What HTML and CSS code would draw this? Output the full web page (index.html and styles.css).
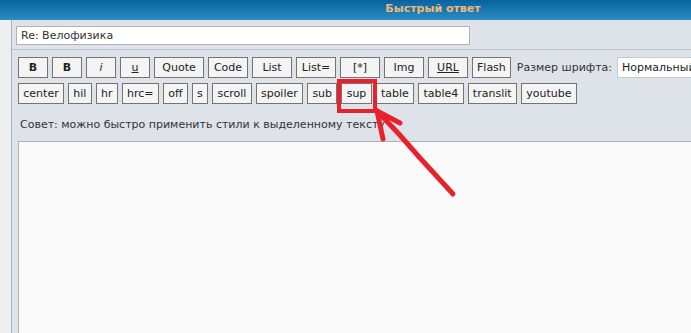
FILE: index.html
```html
<!DOCTYPE html>
<html lang="ru">
<head>
    <meta charset="UTF-8">
    <title>Быстрый ответ</title>
    <link rel="stylesheet" href="styles.css">
</head>
<body>
    <div class="wrap">
        <div class="head"><span>Быстрый ответ</span></div>
        <div class="form">
            <div class="side"></div>
            <div class="main">
                <div class="subj-row">
                    <input class="subj" type="text" value="Re: Велофизика">
                </div>
                <div class="tools">
                    <div class="row">
                        <button class="btn w30"><b>B</b></button>
                        <button class="btn w30"><b>B</b></button>
                        <button class="btn w30"><i>i</i></button>
                        <button class="btn w30"><u>u</u></button>
                        <button class="btn w50">Quote</button>
                        <button class="btn w40">Code</button>
                        <button class="btn w40">List</button>
                        <button class="btn w40">List=</button>
                        <button class="btn w40">[*]</button>
                        <button class="btn w40">Img</button>
                        <button class="btn w40"><u>URL</u></button>
                        <button class="btn">Flash</button>
                        <span class="size-label">Размер шрифта:</span>
                        <div class="select">Нормальный</div>
                    </div>
                    <div class="row row-tags">
                        <button class="btn">center</button>
                        <button class="btn">hil</button>
                        <button class="btn">hr</button>
                        <button class="btn">hrc=</button>
                        <button class="btn">off</button>
                        <button class="btn">s</button>
                        <button class="btn">scroll</button>
                        <button class="btn">spoiler</button>
                        <button class="btn">sub</button>
                        <button class="btn">sup</button>
                        <button class="btn">table</button>
                        <button class="btn">table4</button>
                        <button class="btn">translit</button>
                        <button class="btn">youtube</button>
                    </div>
                    <p class="hint">Совет: можно быстро применить стили к выделенному тексту</p>
                    <div class="message"></div>
                </div>
            </div>
        </div>

        <!-- red annotation drawn over the screenshot -->
        <svg class="mark" width="691" height="333" viewBox="0 0 691 333">
            <rect x="339" y="81" width="36" height="30" fill="none" stroke="#e8222c" stroke-width="4"/>
            <path d="M453 194 L420 158 L398 133 L377 111" fill="none" stroke="#e8222c" stroke-width="5" stroke-linecap="round" stroke-linejoin="round"/>
            <path d="M377 111 L400 123" fill="none" stroke="#e8222c" stroke-width="5" stroke-linecap="round"/>
            <path d="M377 111 L383 139" fill="none" stroke="#e8222c" stroke-width="5" stroke-linecap="round"/>
        </svg>
    </div>
</body>
</html>
```

FILE: styles.css
```css
*{
    box-sizing: border-box;
}
body{
    margin: 0;
    background-color: #efefef;
    overflow: hidden;
    font-family: "DejaVu Sans", Verdana, sans-serif;
    font-size: 11px;
    color: #333;
}
.wrap{
    position: relative;
    width: 880px;
    height: 333px;
}
.head{
    height: 20px;
    width: 866px;
    background: linear-gradient(#08629e, #2b8dc4);
    text-align: center;
    line-height: 18px;
}
.head span{
    color: #f0b878;
    font-weight: bold;
    font-size: 11px;
}
.form{
    display: flex;
    height: 313px;
}
.side{
    width: 12px;
    background-color: #efefef;
    border-right: 1px solid #a9b3bc;
}
.main{
    flex: 1;
    background-color: #dde3e8;
}
.subj-row{
    height: 30px;
    padding: 6px 0 0 4px;
    border-bottom: 1px solid #bcc4cc;
}
.subj{
    display: block;
    width: 454px;
    height: 19px;
    padding: 0 4px;
    border: 1px solid #aab2ba;
    background-color: #fff;
    font-family: "DejaVu Sans", Verdana, sans-serif;
    font-size: 11px;
    color: #333;
}
.tools{
    padding: 7px 0 0 6px;
}
.row{
    display: flex;
    align-items: center;
    gap: 4px;
    height: 21px;
    margin-bottom: 5px;
    white-space: nowrap;
}
.btn{
    height: 21px;
    padding: 0 4px;
    border: 1px solid #747474;
    border-radius: 0;
    background-color: #f4f4f4;
    font-family: "DejaVu Sans", Verdana, sans-serif;
    font-size: 11px;
    color: #222;
    flex-shrink: 0;
}
.row-tags .btn{
    padding: 0 4.3px;
}
.w30{ width: 30px; }
.w40{ width: 40px; }
.w50{ width: 50px; }
.size-label{
    margin-left: 2px;
    color: #333;
}
.select{
    flex-shrink: 0;
    width: 120px;
    height: 21px;
    margin-left: 1px;
    padding: 3px 4px;
    background-color: #fff;
    border: 1px solid #c4cad0;
    color: #222;
}
.hint{
    margin: 14px 0 0 2px;
    height: 23px;
}
.message{
    height: 200px;
    background-color: #fafafa;
    border-top: 1px solid #a9b3bc;
    border-left: 1px solid #a9b3bc;
}
.mark{
    position: absolute;
    left: 0;
    top: 0;
    pointer-events: none;
}
```
